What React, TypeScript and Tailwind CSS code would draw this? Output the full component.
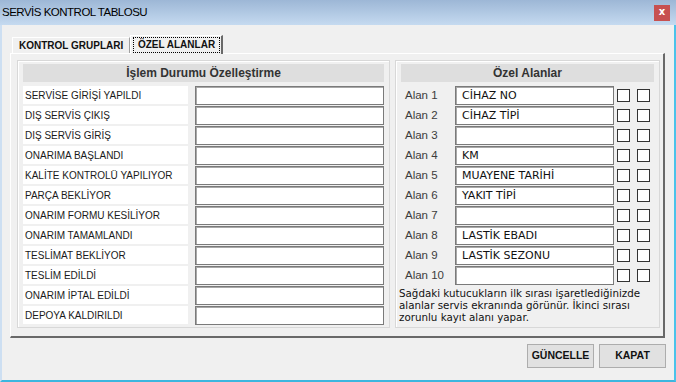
import React from "react";

const leftRows = [
  "SERVİSE GİRİŞİ YAPILDI",
  "DIŞ SERVİS ÇIKIŞ",
  "DIŞ SERVİS GİRİŞ",
  "ONARIMA BAŞLANDI",
  "KALİTE KONTROLÜ YAPILIYOR",
  "PARÇA BEKLİYOR",
  "ONARIM FORMU KESİLİYOR",
  "ONARIM TAMAMLANDI",
  "TESLİMAT BEKLİYOR",
  "TESLİM EDİLDİ",
  "ONARIM İPTAL EDİLDİ",
  "DEPOYA KALDIRILDI",
];

const rightRows = [
  "CİHAZ NO",
  "CİHAZ TİPİ",
  "",
  "KM",
  "MUAYENE TARİHİ",
  "YAKIT TİPİ",
  "",
  "LASTİK EBADI",
  "LASTİK SEZONU",
  "",
];

const sans = "font-['Liberation_Sans',Arial,sans-serif]";
const dv = "font-['DejaVu_Sans',Verdana,sans-serif]";

export default function App() {
  return (
    <div className="w-[676px] h-[382px] flex flex-col bg-[#f0f0f0] overflow-hidden">
      {/* Title bar */}
      <div className="h-[25px] shrink-0 flex items-center justify-between bg-gradient-to-b from-[#9db7d6] to-[#c5daf0] pl-[2px] pr-[6px]">
        <span className={`${sans} text-[11.5px] text-black tracking-[-0.5px]`}>SERVİS KONTROL TABLOSU</span>
        <div className="w-[16px] h-[16px] bg-[#c75050] flex items-center justify-center">
          <span className={`${dv} text-white text-[10px] font-bold leading-none -mt-[2px]`}>x</span>
        </div>
      </div>

      {/* Body */}
      <div className="flex-1 flex flex-col border-l-2 border-l-[#cddff2] border-r-2 border-r-[#4cc3ea] border-b-2 border-b-[#3cb6df]">
        {/* Tabs */}
        <div className="flex items-end pt-[10px] pl-[10px] h-[28px]">
          <div className="h-[16px] w-[118px] border-t border-l border-white border-r border-r-[#a0a0a0] flex items-center pl-[6px]">
            <span className={`${sans} text-[10px] font-bold text-[#111] leading-none`}>KONTROL GRUPLARI</span>
          </div>
          <div className="h-[19px] w-[93px] border-t border-l border-white border-r-2 border-r-[#696969] flex items-start pt-[1px] pl-[2px] -mb-[1px] bg-[#f0f0f0] relative z-10">
            <div className="border border-dotted border-black h-[16px] w-[87px] flex items-center justify-center">
              <span className={`${sans} text-[10px] font-bold text-[#111] leading-none`}>ÖZEL ALANLAR</span>
            </div>
          </div>
        </div>

        {/* Panel */}
        <div className="ml-[8px] w-[655px] h-[285px] border-t border-l border-white border-r-2 border-b-2 border-r-[#696969] border-b-[#696969] flex gap-[5px] pl-[6px] pt-[6px]">
          {/* Left group */}
          <div className="w-[373px] h-[268px] border border-[#d8d8d8] shadow-[inset_1px_1px_0_#ffffff] px-[5px] pt-[3px]">
            <div className="h-[18px] bg-[#dedede] flex items-center justify-center">
              <span className={`${sans} text-[12px] font-bold text-[#333]`}>İşlem Durumu Özelleştirme</span>
            </div>
            <div className="mt-[4px] flex flex-col">
              {leftRows.map((t) => (
                <div key={t} className="h-[20px] flex items-start gap-[7px]">
                  <div className="w-[165px] h-[18px] bg-white flex items-center pl-[2px]">
                    <span className={`${sans} text-[10px] text-[#1a1a1a]`}>{t}</span>
                  </div>
                  <div className="w-[189px] h-[19px] bg-white border border-[#7a7a7a] shadow-[inset_1px_1px_0_#a8a8a8]" />
                </div>
              ))}
            </div>
          </div>

          {/* Right group */}
          <div className="w-[265px] h-[268px] border border-[#d8d8d8] shadow-[inset_1px_1px_0_#ffffff] px-[5px] pt-[3px]">
            <div className="h-[18px] bg-[#dedede] flex items-center justify-center">
              <span className={`${sans} text-[12px] font-bold text-[#333]`}>Özel Alanlar</span>
            </div>
            <div className="mt-[4px] flex flex-col">
              {rightRows.map((v, i) => (
                <div key={i} className="h-[20px] flex items-start">
                  <div className="w-[54px] h-[19px] flex items-center pl-[4px]">
                    <span className={`${sans} text-[11.5px] text-[#3c3c3c]`}>Alan {i + 1}</span>
                  </div>
                  <div className="w-[159px] h-[19px] bg-white border border-[#7a7a7a] shadow-[inset_1px_1px_0_#a8a8a8] flex items-center pl-[6px]">
                    <span className={`${dv} text-[11px] text-[#111] leading-none`}>{v}</span>
                  </div>
                  <div className="ml-[3px] mt-[3px] w-[13px] h-[13px] bg-white border border-[#333]" />
                  <div className="ml-[7px] mt-[3px] w-[13px] h-[13px] bg-white border border-[#333]" />
                </div>
              ))}
            </div>
            <p className={`${dv} text-[10.3px] leading-[12px] text-[#111] mt-[1px] -ml-[2px] w-[262px]`}>
              Sağdaki kutucukların ilk sırası işaretlediğinizde alanlar servis ekranında görünür. İkinci sırası zorunlu kayıt alanı yapar.
            </p>
          </div>
        </div>

        {/* Buttons */}
        <div className="flex justify-end gap-[5px] mt-[6px] mr-[8px]">
          <div className="w-[67px] h-[24px] bg-[#e1e1e1] border border-[#adadad] flex items-center justify-center">
            <span className={`${sans} text-[10.5px] font-bold text-[#111]`}>GÜNCELLE</span>
          </div>
          <div className="w-[67px] h-[24px] bg-[#e1e1e1] border border-[#adadad] flex items-center justify-center">
            <span className={`${sans} text-[10.5px] font-bold text-[#111]`}>KAPAT</span>
          </div>
        </div>
      </div>
    </div>
  );
}
